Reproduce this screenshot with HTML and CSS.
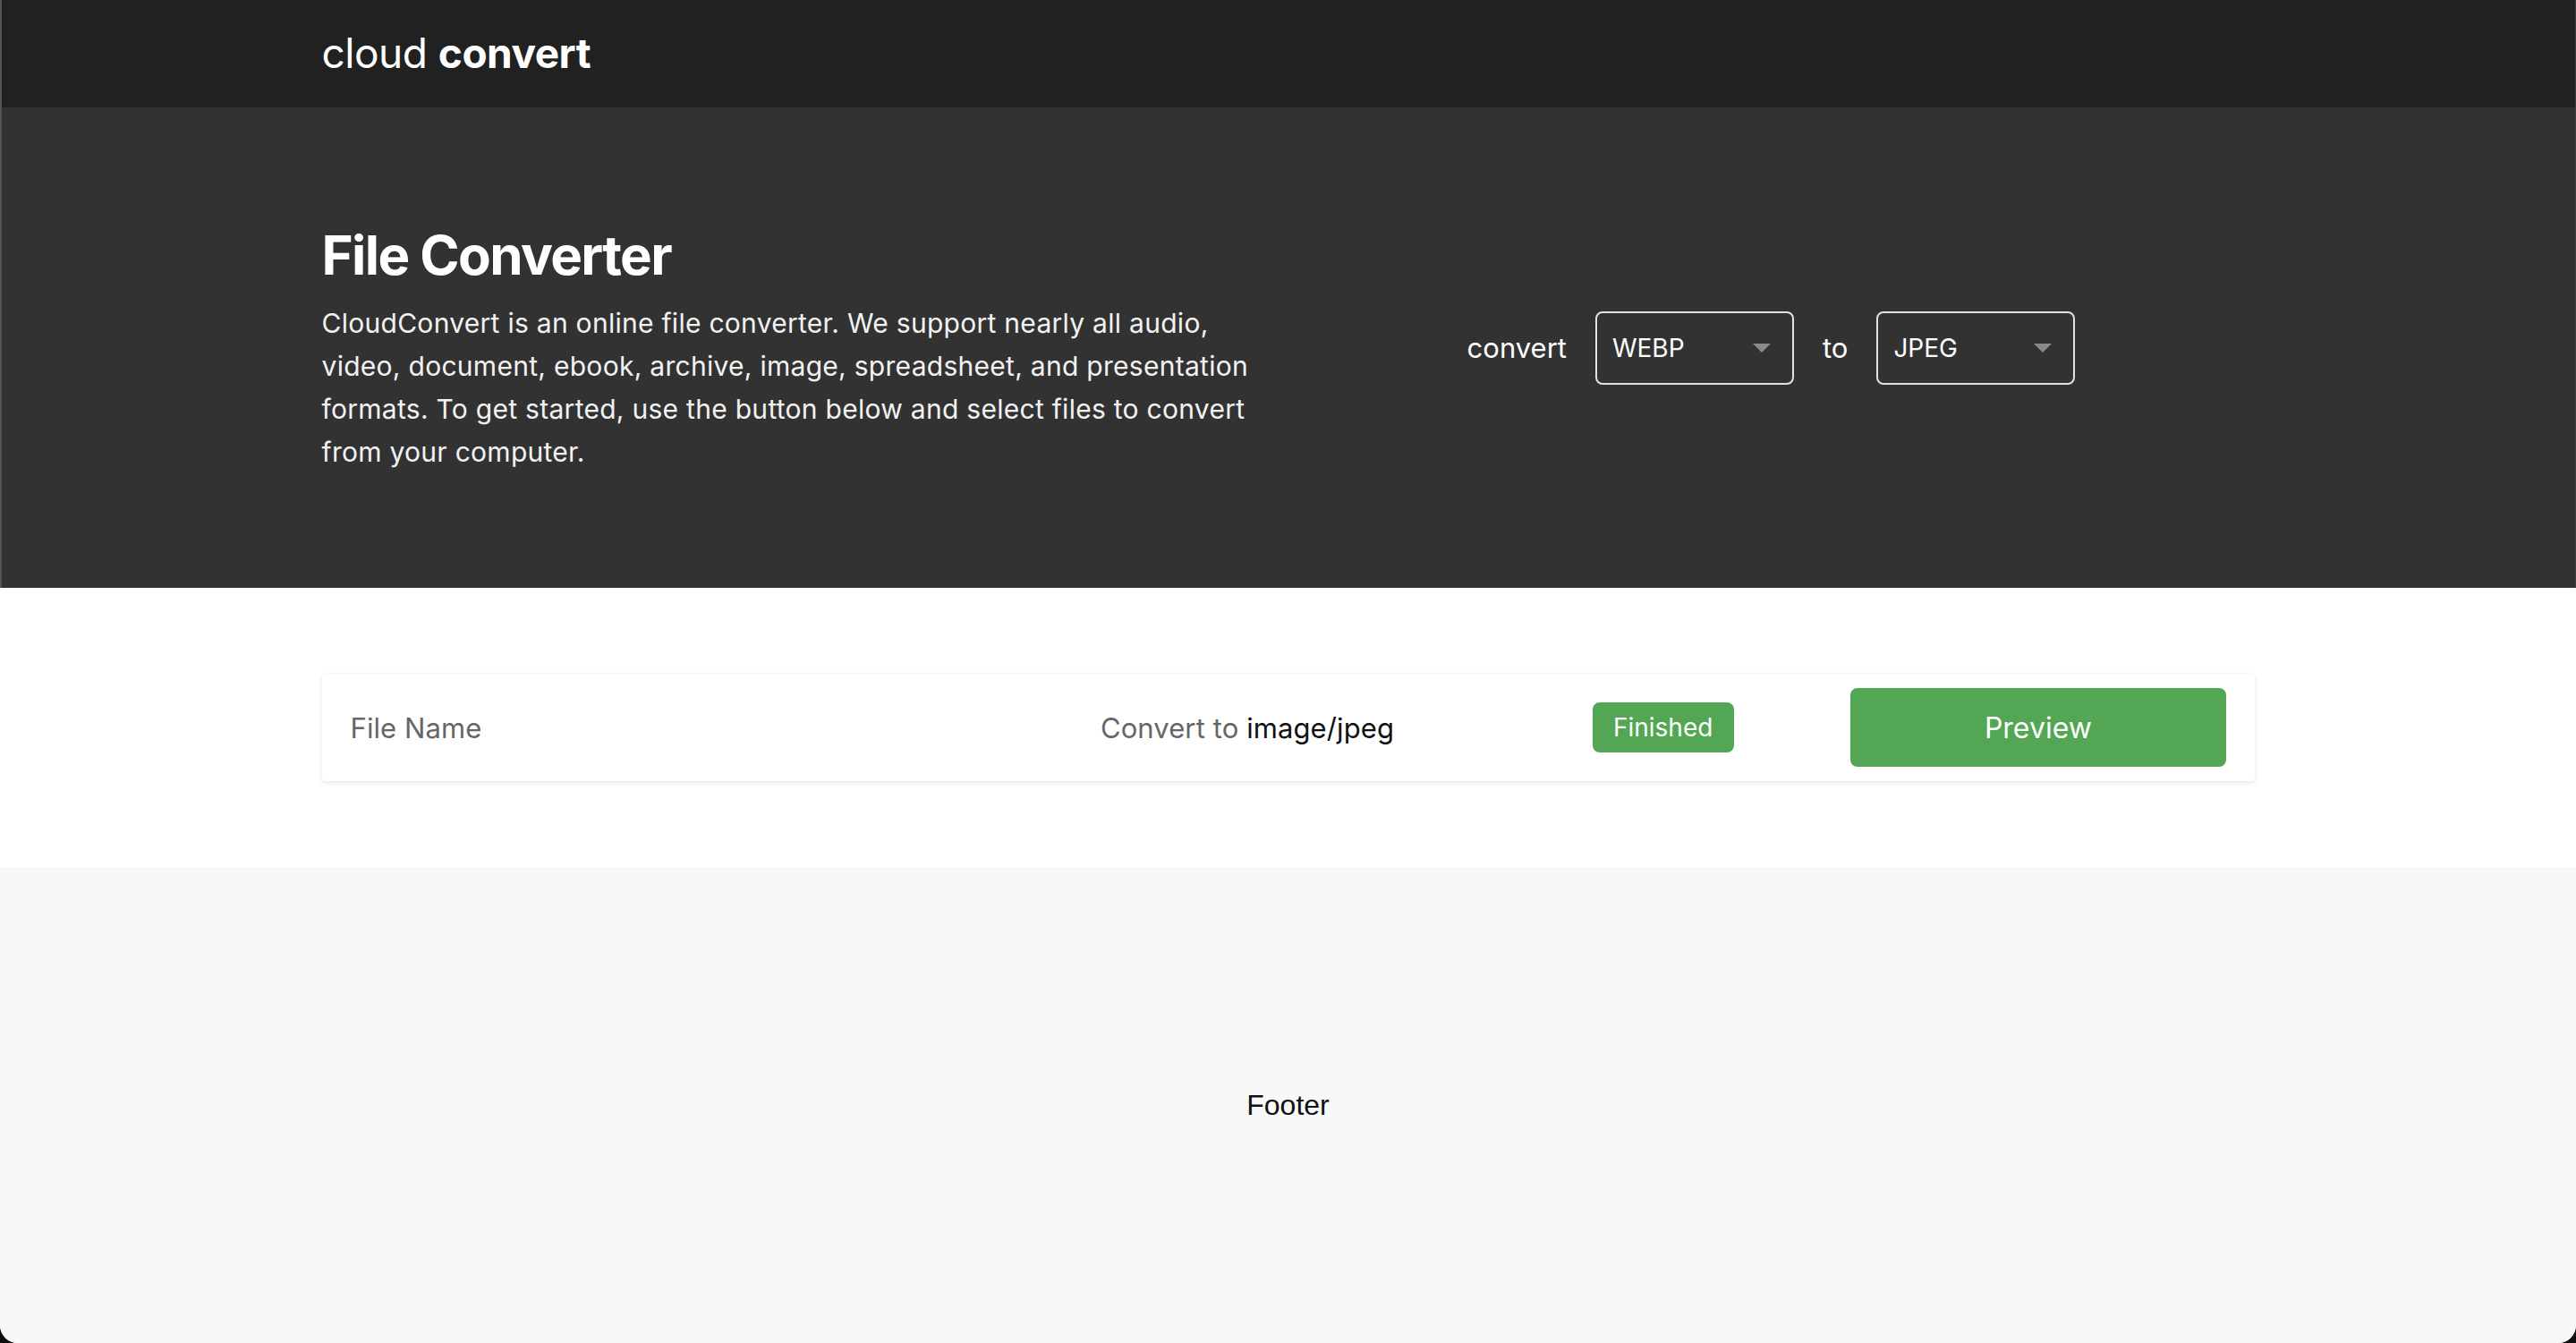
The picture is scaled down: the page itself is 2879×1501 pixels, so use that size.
FILE: index.html
```html
<!DOCTYPE html>
<html lang="en">
<head>
<meta charset="utf-8">
<title>CloudConvert</title>
<link rel="stylesheet" href="styles.css">
</head>
<body>
<div class="window">
  <header class="topbar">
    <div class="container">
      <div class="logo">cloud <b>convert</b></div>
    </div>
  </header>
  <section class="hero">
    <div class="container hero-inner">
      <div class="hero-text">
        <h1 class="title">File Converter</h1>
        <p class="lead">CloudConvert is an online file converter. We support nearly all audio, video, document, ebook, archive, image, spreadsheet, and presentation formats. To get started, use the button below and select files to convert from your computer.</p>
      </div>
      <div class="hero-controls">
        <span class="ctl-label">convert</span>
        <div class="select"><span>WEBP</span><span class="caret"></span></div>
        <span class="ctl-label">to</span>
        <div class="select"><span>JPEG</span><span class="caret"></span></div>
      </div>
    </div>
  </section>
  <main class="jobs">
    <div class="container">
      <div class="job-card">
        <div class="job-name">File Name</div>
        <div class="job-target">Convert to <span class="mime">image/jpeg</span></div>
        <div class="job-status"><span class="badge">Finished</span></div>
        <div class="job-action"><button class="btn">Preview</button></div>
      </div>
    </div>
  </main>
  <footer class="footer">Footer</footer>
</div>
</body>
</html>
```

FILE: styles.css
```css
* { box-sizing: border-box; }
html, body { margin: 0; padding: 0; }
body {
  background: #0f0f0b;
  font-family: Inter, "Noto Sans", sans-serif;
}
.window {
  min-height: 100vh;
  display: flex;
  flex-direction: column;
  border-radius: 0 0 20px 20px;
  overflow: hidden;
  background: #f8f8f8;
}
.container {
  width: 2160px;
  margin: 0 auto;
}
.topbar {
  height: 120px;
  background: #212121;
  display: flex;
  align-items: center;
  box-shadow: inset 2px 0 0 #555555, inset -1px 0 0 #444444;
}
.logo {
  color: #ffffff;
  font-size: 46px;
  letter-spacing: -0.5px;
  line-height: 1;
  padding-bottom: 2px;
}
.logo b { font-weight: 700; }
.hero {
  height: 537px;
  background: #323232;
  display: flex;
  align-items: center;
  box-shadow: inset 2px 0 0 #555555, inset -1px 0 0 #444444;
}
.hero-inner {
  display: flex;
  align-items: center;
}
.hero-text {
  width: 50%;
  padding-right: 20px;
}
.title {
  margin: 0 0 16px;
  color: #ffffff;
  font-size: 60px;
  line-height: 72px;
  font-weight: 700;
  letter-spacing: -1.6px;
}
.lead {
  margin: 0;
  color: #f2f2f2;
  font-size: 30px;
  line-height: 48px;
  letter-spacing: 0.28px;
}
.hero-controls {
  width: 50%;
  display: flex;
  align-items: center;
  justify-content: center;
  gap: 32px;
}
.ctl-label {
  color: #ffffff;
  font-size: 31px;
}
.select {
  width: 222px;
  height: 82px;
  border: 2px solid #e2e2e2;
  border-radius: 8px;
  display: flex;
  align-items: center;
  justify-content: space-between;
  padding: 0 24px 0 17px;
  color: #ffffff;
  font-size: 28px;
}
.caret {
  width: 0;
  height: 0;
  border-left: 10px solid transparent;
  border-right: 10px solid transparent;
  border-top: 10px solid #8a8a8a;
}
.jobs {
  background: #ffffff;
  padding: 96px 0;
}
.job-card {
  height: 120px;
  background: #ffffff;
  border-radius: 4px;
  box-shadow: 0 2px 6px rgba(0, 0, 0, 0.09), 0 0 2px rgba(0, 0, 0, 0.04);
  padding: 0 32px;
  display: grid;
  grid-template-columns: 2fr 1fr 1fr 1fr;
  align-items: center;
}
.job-name, .job-target {
  color: #666666;
  font-size: 31px;
  letter-spacing: 0.1px;
}
.mime { color: #111111; }
.job-status { display: flex; justify-content: center; }
.badge {
  width: 158px;
  height: 56px;
  border-radius: 8px;
  background: #53a653;
  color: #ffffff;
  font-size: 28px;
  display: flex;
  align-items: center;
  justify-content: center;
}
.btn {
  width: 100%;
  height: 88px;
  border: 0;
  border-radius: 8px;
  background: #53a653;
  color: #ffffff;
  font-family: Inter, "Noto Sans", sans-serif;
  font-size: 32px;
  cursor: pointer;
}
.footer {
  flex: 1;
  background: #f8f8f8;
  display: flex;
  align-items: center;
  justify-content: center;
  font-family: "Liberation Sans", Arial, sans-serif;
  font-size: 32px;
  color: #111111;
}
```
